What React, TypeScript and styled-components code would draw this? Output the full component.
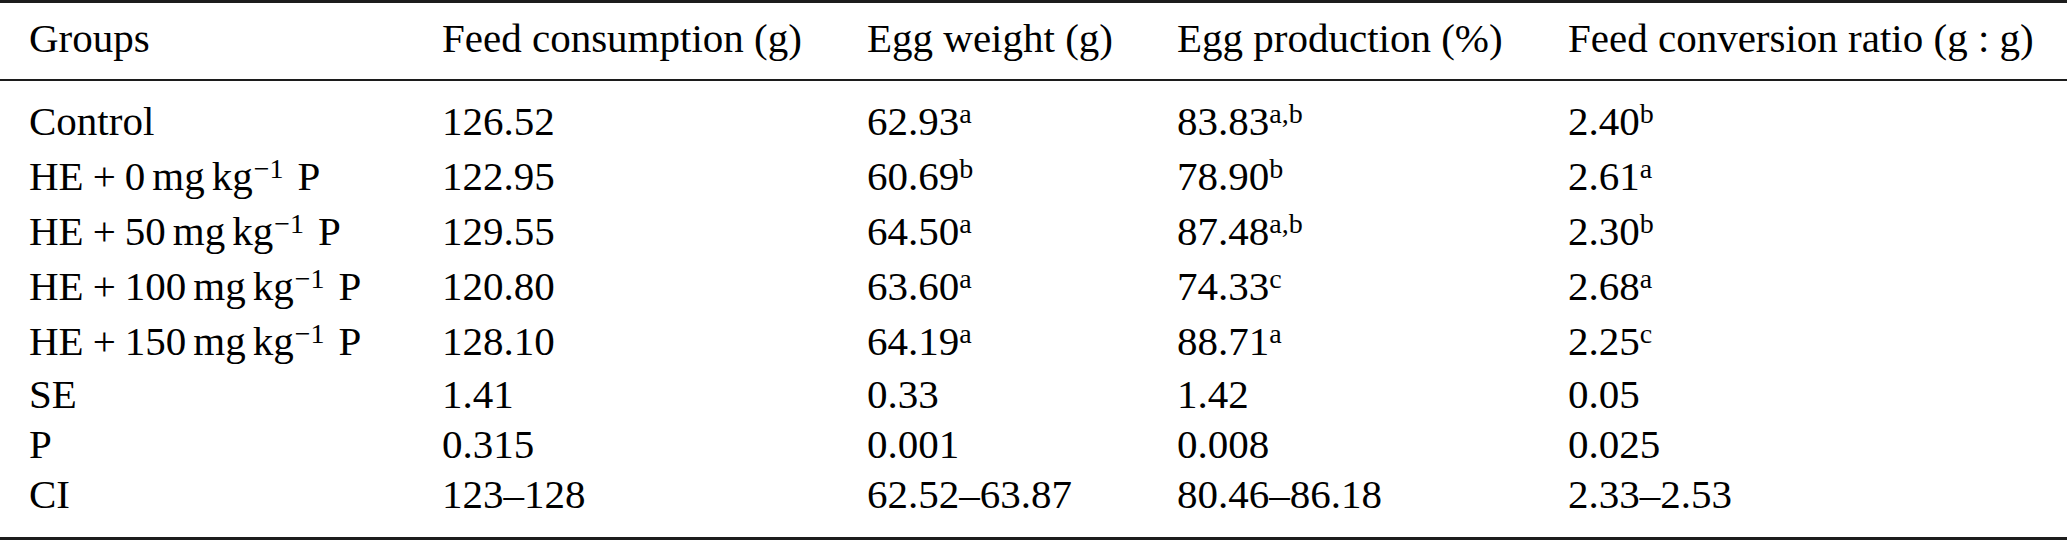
import React from "react";
import styled, { createGlobalStyle } from "styled-components";

const GlobalStyle = createGlobalStyle`
  html, body {
    margin: 0;
    padding: 0;
    background: #ffffff;
  }
  body {
    font-family: "Liberation Serif", "Times New Roman", Times, "DejaVu Serif", serif;
    color: #000000;
  }
`;

type Mark = { v: string; s?: string };

interface RowData {
  group: React.ReactNode;
  feed: Mark;
  weight: Mark;
  prod: Mark;
  fcr: Mark;
  tall?: boolean;
}

// "HE + n mg kg^-1 P" as it is set in the source table
const Dose: React.FC<{ n: string }> = ({ n }) => (
  <>
    HE<Op>+</Op>
    {n}
    <Thin />mg<Thin />kg
    <MathSup>−1</MathSup>
    <Gap />P
  </>
);

const rows: RowData[] = [
  { group: "Control", feed: { v: "126.52" }, weight: { v: "62.93", s: "a" }, prod: { v: "83.83", s: "a,b" }, fcr: { v: "2.40", s: "b" }, tall: true },
  { group: <Dose n="0" />, feed: { v: "122.95" }, weight: { v: "60.69", s: "b" }, prod: { v: "78.90", s: "b" }, fcr: { v: "2.61", s: "a" }, tall: true },
  { group: <Dose n="50" />, feed: { v: "129.55" }, weight: { v: "64.50", s: "a" }, prod: { v: "87.48", s: "a,b" }, fcr: { v: "2.30", s: "b" }, tall: true },
  { group: <Dose n="100" />, feed: { v: "120.80" }, weight: { v: "63.60", s: "a" }, prod: { v: "74.33", s: "c" }, fcr: { v: "2.68", s: "a" }, tall: true },
  { group: <Dose n="150" />, feed: { v: "128.10" }, weight: { v: "64.19", s: "a" }, prod: { v: "88.71", s: "a" }, fcr: { v: "2.25", s: "c" }, tall: true },
  { group: "SE", feed: { v: "1.41" }, weight: { v: "0.33" }, prod: { v: "1.42" }, fcr: { v: "0.05" } },
  { group: "P", feed: { v: "0.315" }, weight: { v: "0.001" }, prod: { v: "0.008" }, fcr: { v: "0.025" } },
  { group: "CI", feed: { v: "123–128" }, weight: { v: "62.52–63.87" }, prod: { v: "80.46–86.18" }, fcr: { v: "2.33–2.53" } },
];

const headers = [
  "Groups",
  "Feed consumption (g)",
  "Egg weight (g)",
  "Egg production (%)",
  "Feed conversion ratio (g : g)",
];

const Value: React.FC<{ m: Mark }> = ({ m }) => (
  <>
    {m.v}
    {m.s && <Sup>{m.s}</Sup>}
  </>
);

const App: React.FC = () => {
  return (
    <Page>
      <GlobalStyle />
      <Table>
        <HeadRow>
          {headers.map((h) => (
            <Cell key={h}>{h}</Cell>
          ))}
        </HeadRow>
        <Body>
          {rows.map((r, i) => (
            <Row key={i} $tall={r.tall}>
              <Cell>{r.group}</Cell>
              <Cell>
                <Value m={r.feed} />
              </Cell>
              <Cell>
                <Value m={r.weight} />
              </Cell>
              <Cell>
                <Value m={r.prod} />
              </Cell>
              <Cell>
                <Value m={r.fcr} />
              </Cell>
            </Row>
          ))}
        </Body>
      </Table>
    </Page>
  );
};

const Page = styled.div`
  width: 2067px;
  height: 540px;
  background: #ffffff;
  overflow: hidden;
`;

const Table = styled.div`
  box-sizing: border-box;
  height: 540px;
  border-top: 3px solid #1c1c1c;
  border-bottom: 3px solid #1c1c1c;
  display: flex;
  flex-direction: column;
  font-family: "Liberation Serif", "Times New Roman", Times, "DejaVu Serif", serif;
  font-size: 41px;
  color: #000000;
`;

const columns = "413px 425px 310px 391px 1fr";

const HeadRow = styled.div`
  display: grid;
  grid-template-columns: ${columns};
  padding: 10px 0 16px 29px;
  height: 50px;
  line-height: 50px;
  border-bottom: 2px solid #1c1c1c;
`;

const Body = styled.div`
  flex: 1;
  padding-top: 13px;
`;

const Row = styled.div<{ $tall?: boolean }>`
  display: grid;
  grid-template-columns: ${columns};
  padding-left: 29px;
  height: ${(p) => (p.$tall ? "55px" : "50px")};
  line-height: ${(p) => (p.$tall ? "55px" : "50px")};
`;

const Cell = styled.div`
  white-space: nowrap;
`;

const Sup = styled.span`
  font-size: 28px;
  line-height: 0;
  vertical-align: 12px;
`;

const MathSup = styled.span`
  font-size: 28px;
  line-height: 0;
  vertical-align: 12px;
  margin-left: 1px;
`;

const Op = styled.span`
  margin: 0 9px;
`;

const Thin = styled.span`
  display: inline-block;
  width: 7px;
`;

const Gap = styled.span`
  display: inline-block;
  width: 14px;
`;

export default App;
